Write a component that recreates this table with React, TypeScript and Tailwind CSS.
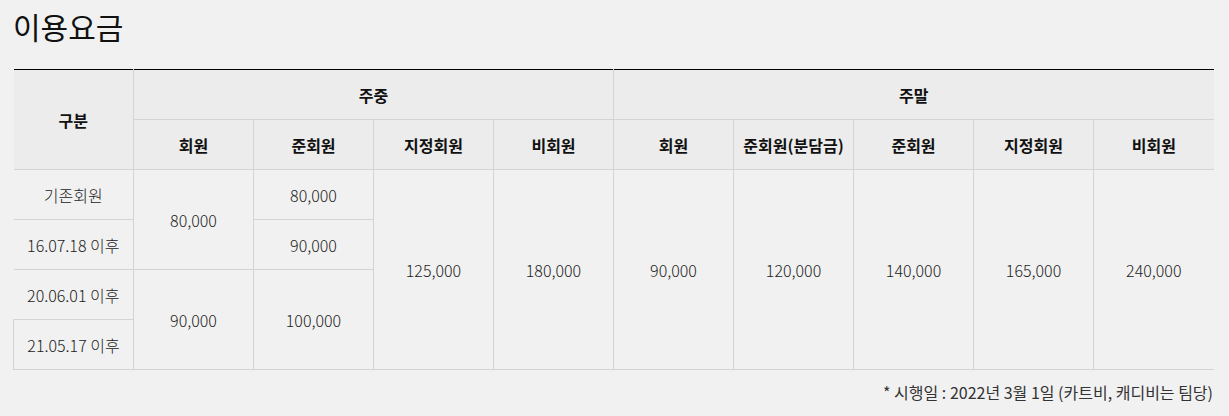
const F = { fontFamily: '"Noto Sans CJK KR", "Noto Sans", sans-serif' };

const th = "h-[50px] border border-[#d4d4d4] bg-[#ececec] text-center align-middle text-[16px] font-bold text-[#111] p-0";
const td = "h-[50px] border border-[#d4d4d4] text-center align-middle text-[16px] font-light text-[#222] p-0";

export default function App() {
  return (
    <div className="min-h-[416px] w-[1229px] bg-[#f1f1f1] px-[13px] pt-[6px]" style={F}>
      <h1 className="text-[30px] leading-[40px] font-normal text-[#111]">이용요금</h1>
      <table className="mt-[23px] w-[1200px] table-fixed border-collapse border-t border-t-black">
        <colgroup>
          {Array.from({ length: 10 }).map((_, i) => (
            <col key={i} className="w-[120px]" />
          ))}
        </colgroup>
        <thead>
          <tr>
            <th rowSpan={2} className={th + " border-l-0 border-t-black"}>구분</th>
            <th colSpan={4} className={th + " border-t-black"}>주중</th>
            <th colSpan={5} className={th + " border-r-0 border-t-black"}>주말</th>
          </tr>
          <tr>
            <th className={th}>회원</th>
            <th className={th}>준회원</th>
            <th className={th}>지정회원</th>
            <th className={th}>비회원</th>
            <th className={th}>회원</th>
            <th className={th}>준회원(분담금)</th>
            <th className={th}>준회원</th>
            <th className={th}>지정회원</th>
            <th className={th + " border-r-0"}>비회원</th>
          </tr>
        </thead>
        <tbody>
          <tr>
            <td className={td + " border-l-0"}>기존회원</td>
            <td rowSpan={2} className={td}>80,000</td>
            <td className={td}>80,000</td>
            <td rowSpan={4} className={td}>125,000</td>
            <td rowSpan={4} className={td}>180,000</td>
            <td rowSpan={4} className={td}>90,000</td>
            <td rowSpan={4} className={td}>120,000</td>
            <td rowSpan={4} className={td}>140,000</td>
            <td rowSpan={4} className={td}>165,000</td>
            <td rowSpan={4} className={td + " border-r-0"}>240,000</td>
          </tr>
          <tr>
            <td className={td + " border-l-0"}>16.07.18 이후</td>
            <td className={td}>90,000</td>
          </tr>
          <tr>
            <td className={td + " border-l-0"}>20.06.01 이후</td>
            <td rowSpan={2} className={td}>90,000</td>
            <td rowSpan={2} className={td}>100,000</td>
          </tr>
          <tr>
            <td className={td}>21.05.17 이후</td>
          </tr>
        </tbody>
      </table>
      <p className="mt-[10px] w-[1200px] text-right text-[16px] leading-[24px] font-normal text-[#333]">
        * 시행일 : 2022년 3월 1일 (카트비, 캐디비는 팀당)
      </p>
    </div>
  );
}
